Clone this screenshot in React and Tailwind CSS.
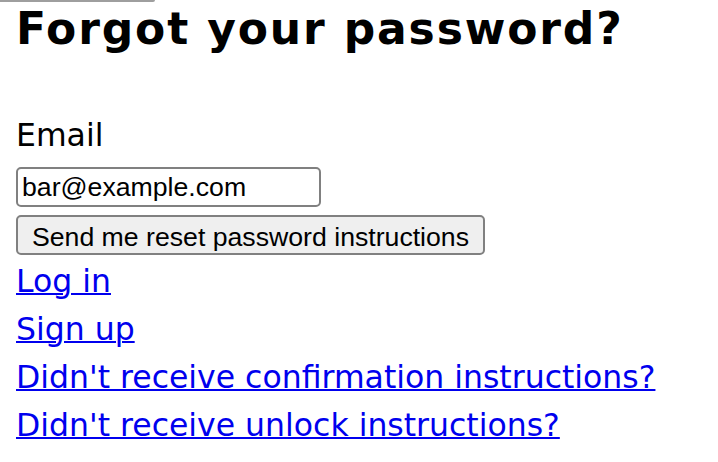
export default function App() {
  const links = [
    'Log in',
    'Sign up',
    "Didn't receive confirmation instructions?",
    "Didn't receive unlock instructions?",
  ];

  return (
    <div className="min-h-screen bg-white text-black font-['DejaVu_Sans',sans-serif]">
      <div className="h-[2px] w-[155px] rounded-br-full bg-[#9e9e9e]" />
      <div className="px-[16px]">
        <h2 className="mt-[3px] text-[44px] leading-[48px] font-bold tracking-[1.85px]">Forgot your password?</h2>

        <form className="mt-[58px] flex flex-col items-start" onSubmit={(e) => e.preventDefault()}>
          <label htmlFor="user_email" className="text-[31.5px] leading-[48px]">Email</label>
          <input
            id="user_email"
            type="email"
            defaultValue="bar@example.com"
            className="mt-[8px] h-[40px] w-[305px] rounded-[5px] border-2 border-[#808080] bg-white px-[4px] font-['Liberation_Sans',Arial,sans-serif] text-[26.67px] text-black outline-none"
          />
          <button
            type="submit"
            className="mt-[8px] h-[40px] w-[469px] rounded-[5px] border-2 border-[#808080] bg-[#efefef] font-['Liberation_Sans',Arial,sans-serif] text-[26.67px] text-black"
          >
            Send me reset password instructions
          </button>
        </form>

        <div className="mt-[2px] flex flex-col items-start">
          {links.map((label) => (
            <a
              key={label}
              href="#"
              className="text-[31.5px] leading-[48px] text-[#0000ee] underline decoration-[2px] underline-offset-[1px]"
            >
              {label}
            </a>
          ))}
        </div>
      </div>
    </div>
  );
}
